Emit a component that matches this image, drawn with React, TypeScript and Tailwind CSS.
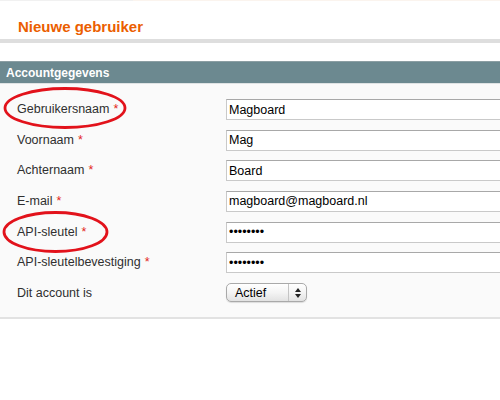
const fields = [
  { label: "Gebruikersnaam", value: "Magboard", required: true },
  { label: "Voornaam", value: "Mag", required: true },
  { label: "Achternaam", value: "Board", required: true },
  { label: "E-mail", value: "magboard@magboard.nl", required: true },
  { label: "API-sleutel", value: "magboard", required: true, secret: true },
  { label: "API-sleutelbevestiging", value: "magboard", required: true, secret: true },
];

function Label({ text, required }: { text: string; required?: boolean }) {
  return (
    <div className="w-[226px] shrink-0 pl-[17px] text-[12.5px] text-[#2f2f2f]">
      {text}
      {required && <span className="ml-[4px] text-[#e3261b]">*</span>}
    </div>
  );
}

function StatusSelect() {
  return (
    <div className="flex h-[19px] w-[81px] items-center rounded-[5px] border border-[#a9a9a9] bg-gradient-to-b from-white via-[#f4f4f4] to-[#e2e2e2] shadow-[0_1px_1px_rgba(0,0,0,0.12)]">
      <span className="flex-1 pl-[8px] text-[12.5px] leading-none text-black">Actief</span>
      <div className="flex h-full w-[18px] flex-col items-center justify-center gap-[2px] border-l border-[#c4c4c4]">
        <svg width="6" height="4" viewBox="0 0 6 4">
          <path d="M0 4 L3 0 L6 4 Z" fill="#222" />
        </svg>
        <svg width="6" height="4" viewBox="0 0 6 4">
          <path d="M0 0 L3 4 L6 0 Z" fill="#222" />
        </svg>
      </div>
    </div>
  );
}

export default function App() {
  return (
    <div className="relative h-[400px] w-[500px] overflow-hidden bg-white font-['Liberation_Sans',Arial,sans-serif]">
      <div className="flex h-px">
        <div className="w-[133px] bg-[#f1f1f1]" />
        <div className="flex-1 bg-[#fbf4ee]" />
      </div>

      <div className="h-[38px] pl-[18px] pt-[17px]">
        <h1 className="text-[15px] font-bold leading-[17px] text-[#eb5e00]">Nieuwe gebruiker</h1>
      </div>
      <div className="h-[4px] bg-[#dedede]" />
      <div className="h-[18px]" />

      <div className="flex h-[23px] items-center border-t border-[#8b9ea3] border-b border-b-[#dfe3e4] bg-[#6c8990] pl-[6px]">
        <h2 className="text-[12px] font-bold text-white">Accountgegevens</h2>
      </div>

      <div className="flex flex-col gap-[9.67px] overflow-hidden border-b-2 border-[#e2e2e2] bg-[#fafafa] pb-[14px] pt-[15px]">
        {fields.map((f) => (
          <div key={f.label} className="flex h-[21px] items-center">
            <Label text={f.label} required={f.required} />
            <input
              readOnly
              type={f.secret ? "password" : "text"}
              value={f.value}
              className="h-[21px] w-[300px] shrink-0 border border-[#c9c9c9] border-t-[#a8a8a8] bg-white pl-[2px] text-[12.5px] text-black outline-none"
            />
          </div>
        ))}
        <div className="flex h-[20px] items-center">
          <Label text="Dit account is" />
          <StatusSelect />
        </div>
      </div>

      <svg className="pointer-events-none absolute left-0 top-0" width="500" height="400">
        <ellipse cx="65" cy="108" rx="60" ry="19.5" fill="none" stroke="#e2121b" strokeWidth="2.8" />
        <ellipse cx="55.5" cy="232" rx="51.5" ry="19.5" fill="none" stroke="#e2121b" strokeWidth="2.8" />
      </svg>
    </div>
  );
}
